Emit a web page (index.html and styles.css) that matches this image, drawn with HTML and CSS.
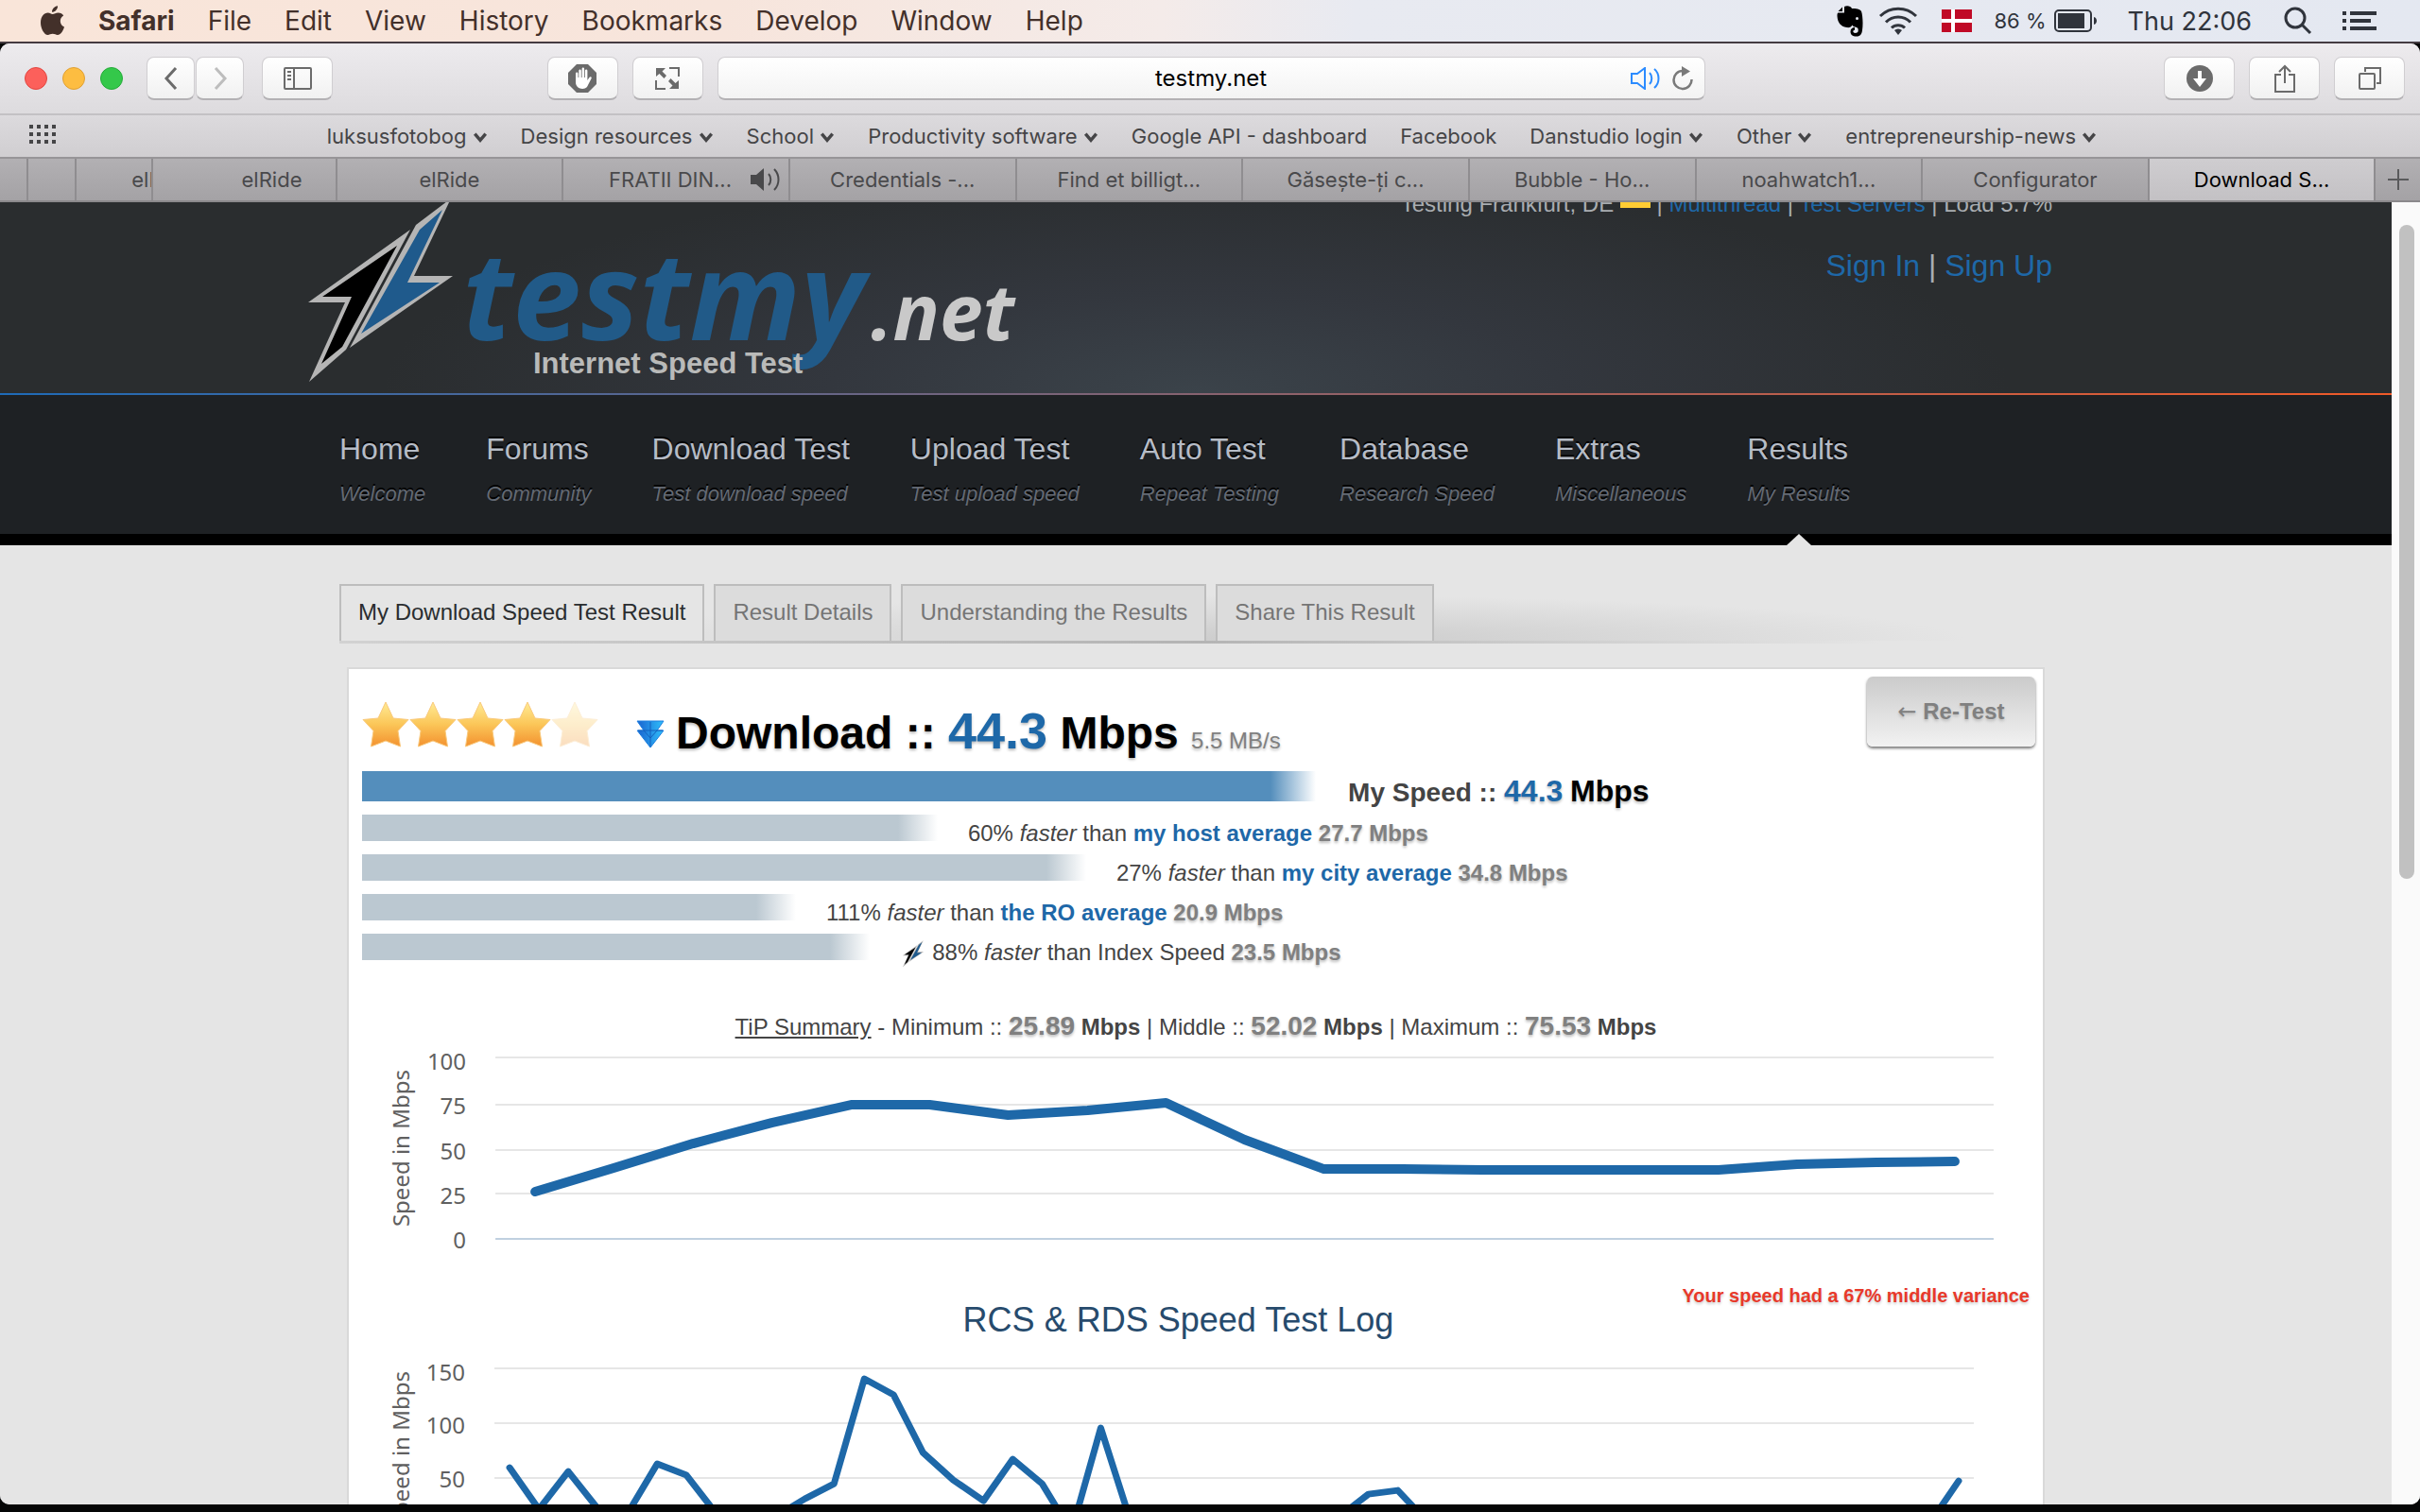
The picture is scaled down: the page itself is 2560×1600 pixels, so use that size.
FILE: index.html
```html
<!DOCTYPE html>
<html lang="en">
<head>
<meta charset="utf-8">
<meta name="viewport" content="width=device-width, initial-scale=1">
<title>Download Speed Test Result</title>
<link rel="stylesheet" href="styles.css">
</head>
<body>

<svg class="defs" aria-hidden="true">
  <defs>
    <symbol id="chevron" viewBox="0 0 14 12"><path d="M2 3l5 6 5-6" fill="none" stroke="currentColor" stroke-width="3"/></symbol>
    <symbol id="bolt" viewBox="0 0 156 206">
      <path d="M109 41L1 118h39L2 202l39-34z" fill="#b5b5b5"/>
      <path d="M95 58L16 112h31L15 183l22-18z" fill="#000"/>
      <path d="M152 8l-37 28L45 166l109-76h-41z" fill="#b5b5b5"/>
      <path d="M143 20l-24 21L57 151l83-54h-34z" fill="#1f5a8c"/>
    </symbol>
    <linearGradient id="gold" x1="0" y1="0" x2="0" y2="1">
      <stop offset="0" stop-color="#ffeb95"/>
      <stop offset=".5" stop-color="#fbc658"/>
      <stop offset="1" stop-color="#f3912f"/>
    </linearGradient>
    <linearGradient id="sky" x1="0" y1="0" x2="1" y2="0">
      <stop offset="0" stop-color="#1a62cf"/>
      <stop offset="1" stop-color="#2fc0fb"/>
    </linearGradient>
    <symbol id="star" viewBox="0 0 50 50"><path d="M25 2l8 17 16 1.500-11 12 2.500 16.500L25 43 9.500 49 12 32.500 1 20.500 17 19z" fill="url(#gold)" stroke="#f9c97c" stroke-width="1" stroke-linejoin="round"/></symbol>
  </defs>
</svg>

<!-- System menu bar -->
<header class="menubar">
  <nav class="menus">
    <button aria-label="Apple"><svg width="27" height="32" viewBox="0 0 27 32"><path d="M13.500 9c2 0 3.500-1.500 6-1.500 2.600 0 4.600 1.300 5.700 3-5 3-4.200 10 .8 12C24.600 27 22 31 19 31c-2 0-3-1.200-5.300-1.200S10.500 31 8.500 31C5 31 1 24.500 1 18 1 11.500 4.800 7.500 8.700 7.500c2.200 0 3.300 1.500 4.800 1.500zM13 6.800C12.900 3.500 15.500.6 19 .2c.3 3.400-2.700 6.600-6 6.600z" fill="#43302a"/></svg></button>
    <button class="app">Safari</button>
    <button>File</button>
    <button>Edit</button>
    <button>View</button>
    <button>History</button>
    <button>Bookmarks</button>
    <button>Develop</button>
    <button>Window</button>
    <button>Help</button>
  </nav>
  <div class="status">
    <svg width="28" height="33" viewBox="0 0 28 33"><path d="M8 1c3-1.500 7-.5 8 2 4 0 9 .5 10 3 1.500 4 2 14 1 20-.5 4-2 6.500-6 6.500-4.500 0-6.500-2-6.500-5s2-4.500 4.500-4.500v3c-1.500 0-2 1-1.500 2 .5 1.200 4.500 1.300 5-.5.500-2 .2-4-1.500-4.500-2-.5-4-1-4.500-2.500-1 2-3 3-6 2.500C4 22 1 18 .5 11c0-2 0-3 1-3.500H8zM6 1.500V6H1.500z" fill="#000"/><circle cx="21.500" cy="13.500" r="1.500" fill="#e6e9f1"/></svg>
    <svg class="wifi" width="42" height="30" viewBox="0 0 42 30" fill="none" stroke="#30343c" stroke-width="3"><path d="M2 10a27 27 0 0 1 38 0M8 16.500a18 18 0 0 1 26 0M14 22.500a10 10 0 0 1 14 0"/><path d="M17 25a6 6 0 0 1 8 0l-4 5z" fill="#30343c" stroke="none"/></svg>
    <svg class="flag" width="32" height="24" viewBox="0 0 32 24"><path d="M0 0h32v24H0z" fill="#c00a26"/><path d="M10 0h4v24h-4zM0 10h32v4H0z" fill="#fff"/></svg>
    <span class="percent">86 %</span>
    <svg class="battery" width="46" height="24" viewBox="0 0 46 24"><rect x="1" y="1" width="38" height="22" rx="4" fill="none" stroke="#30343c" stroke-width="2"/><path d="M4 4h28v16H4zM42 8c4 1 4 7 0 8z" fill="#30343c"/></svg>
    <span class="clock">Thu 22:06</span>
    <svg width="30" height="30" viewBox="0 0 30 30" fill="none" stroke="#30343c" stroke-width="3"><circle cx="12" cy="12" r="10"/><path d="M19 19l9 9"/></svg>
    <svg class="list" width="36" height="22" viewBox="0 0 36 22"><path d="M0 1h4v4H0zM8 1h28v4H8zM0 9h4v4H0zM8 9h22v4H8zM0 17h4v4H0zM8 17h28v4H8z" fill="#30343c"/></svg>
  </div>
</header>

<div class="window">

  <div class="toolbar">
    <div class="lights">
      <button class="close" aria-label="Close"></button>
      <button class="minimise" aria-label="Minimise"></button>
      <button class="zoom" aria-label="Zoom"></button>
    </div>
    <div class="history">
      <button class="tool" aria-label="Back"><svg width="16" height="26" viewBox="0 0 16 26"><path d="M13 2L3 13l10 11" fill="none" stroke="#6b6b6b" stroke-width="3"/></svg></button>
      <button class="tool" aria-label="Forward"><svg width="16" height="26" viewBox="0 0 16 26"><path d="M3 2l10 11L3 24" fill="none" stroke="#bdbdbd" stroke-width="3"/></svg></button>
    </div>
    <button class="tool wide" aria-label="Sidebar"><svg width="30" height="24" viewBox="0 0 30 24" fill="none" stroke="#6b6b6b" stroke-width="2"><rect x="1" y="1" width="28" height="22" rx="1"/><path d="M11 1v22M4 5h4M4 9h4M4 13h4"/></svg></button>
    <div class="extensions">
      <button class="tool wide" aria-label="Block ads"><svg width="30" height="30" viewBox="0 0 30 30"><path d="M9 0h12l9 9v12l-9 9H9l-9-9V9z" fill="#6b6b6b"/><path d="M8 10c0-2 2.500-2 2.500 0v4h.8V7c0-2 2.500-2 2.500 0v7h.8V5c0-2 2.500-2 2.500 0v9h.8V7c0-2 2.500-2 2.500 0v10l2-3c1-1.500 3-.6 2.200 1L20 24c-3 3.500-12 2.500-12-5z" fill="#fff"/></svg></button>
      <button class="tool wide" aria-label="Expand"><svg width="26" height="24" viewBox="0 0 26 24"><path d="M1 10V1h10L7.500 4.500 12 9 9.500 12 4.500 7zM25 14v9H15l3.500-3.500L14 15l2.500-3 5 5z" fill="#6b6b6b"/><path d="M15 1h10v9M1 14v9h10" fill="none" stroke="#6b6b6b" stroke-width="2"/></svg></button>
    </div>
    <div class="address">
      <input type="text" value="testmy.net" aria-label="Address">
      <div class="address-icons">
        <button aria-label="Mute"><svg width="32" height="24" viewBox="0 0 32 24" fill="none" stroke="#2b8bff" stroke-width="2"><path d="M1 7h6l8-6v22l-8-6H1zM20 6c3 3 3 9 0 12M25 2c6 5 6 15 0 20"/></svg></button>
        <button aria-label="Reload"><svg width="24" height="26" viewBox="0 0 24 26"><path d="M12 5A9.500 9.500 0 1 0 21.500 14" fill="none" stroke="#7a7a7a" stroke-width="2.500"/><path d="M11 0l9 5.500-9 5.500z" fill="#7a7a7a"/></svg></button>
      </div>
    </div>
    <div class="actions">
      <button class="tool wide" aria-label="Downloads"><svg width="28" height="28" viewBox="0 0 28 28"><circle cx="14" cy="14" r="14" fill="#6b6b6b"/><path d="M12 6h4v8h5l-7 9-7-9h5z" fill="#fff"/></svg></button>
      <button class="tool wide" aria-label="Share"><svg width="24" height="30" viewBox="0 0 24 30" fill="none" stroke="#6b6b6b" stroke-width="2"><path d="M8 11H2v18h20V11h-6M12 20V2M6 8l6-6 6 6"/></svg></button>
      <button class="tool wide" aria-label="Show all tabs"><svg width="24" height="24" viewBox="0 0 24 24" fill="none" stroke="#6b6b6b" stroke-width="2"><rect x="1" y="7" width="16" height="16" rx="1"/><path d="M7 5V1h16v16h-4"/></svg></button>
    </div>
  </div>

  <nav class="favorites">
    <button class="grid" aria-label="Top sites"><svg width="28" height="20" viewBox="0 0 28 20"><path d="M0 0h4v4H0zM8 0h4v4H8zM16 0h4v4h-4zM24 0h4v4h-4zM0 8h4v4H0zM8 8h4v4H8zM16 8h4v4h-4zM24 8h4v4h-4zM0 16h4v4H0zM8 16h4v4H8zM16 16h4v4h-4zM24 16h4v4h-4z" fill="#454547"/></svg></button>
    <div class="links">
      <button>luksusfotobog <svg class="chevron"><use href="#chevron"/></svg></button>
      <button>Design resources <svg class="chevron"><use href="#chevron"/></svg></button>
      <button>School <svg class="chevron"><use href="#chevron"/></svg></button>
      <button>Productivity software <svg class="chevron"><use href="#chevron"/></svg></button>
      <a href="#">Google API - dashboard</a>
      <a href="#">Facebook</a>
      <button>Danstudio login <svg class="chevron"><use href="#chevron"/></svg></button>
      <button>Other <svg class="chevron"><use href="#chevron"/></svg></button>
      <button>entrepreneurship-news <svg class="chevron"><use href="#chevron"/></svg></button>
    </div>
  </nav>

  <div class="browser-tabs">
    <button class="t1" aria-label="Tab"></button>
    <button class="t2" aria-label="Tab"></button>
    <button class="t3">elRide</button>
    <button class="t4">elRide</button>
    <button>elRide</button>
    <button class="playing">FRATII DIN... <svg width="32" height="24" viewBox="0 0 32 24"><path d="M0 7h6l8-7v24l-8-7H0z" fill="#49494b"/><path d="M19 6c3 3 3 9 0 12M25 1c6 6 6 16 0 22" fill="none" stroke="#49494b" stroke-width="2"/></svg></button>
    <button>Credentials -...</button>
    <button>Find et billigt...</button>
    <button>Găsește-ți c...</button>
    <button>Bubble - Ho...</button>
    <button>noahwatch1...</button>
    <button>Configurator</button>
    <button class="active">Download S...</button>
    <button class="new" aria-label="New tab"><svg width="24" height="24" viewBox="0 0 24 24"><path d="M12 1v22M1 12h22" stroke="#5a5a5c" stroke-width="2"/></svg></button>
  </div>

  <div class="viewport">
    <main class="page">

      <div class="masthead">
        <div class="container masthead-row">
          <svg class="logo" width="760" height="214" viewBox="0 0 760 214">
            <use href="#bolt" width="156" height="206"/>
            <text class="logo-name" x="164" y="158">testmy</text>
            <text class="logo-net" x="596" y="158">.net</text>
            <text class="logo-tag" x="239" y="193">Internet Speed Test</text>
          </svg>
          <div class="account">
            <div class="server">Testing Frankfurt, DE <span class="de"></span> | <a href="#">Multithread</a> | <a href="#">Test Servers</a> | Load 5.7%</div>
            <div class="sign"><a href="#">Sign In</a> | <a href="#">Sign Up</a></div>
          </div>
        </div>
      </div>

      <nav class="mainnav">
        <div class="container mainnav-row">
          <a href="#">Home<em>Welcome</em></a>
          <a href="#">Forums<em>Community</em></a>
          <a href="#">Download Test<em>Test download speed</em></a>
          <a href="#">Upload Test<em>Test upload speed</em></a>
          <a href="#">Auto Test<em>Repeat Testing</em></a>
          <a href="#">Database<em>Research Speed</em></a>
          <a href="#">Extras<em>Miscellaneous</em></a>
          <a href="#" class="current">Results<em>My Results</em></a>
        </div>
      </nav>

      <div class="container">
        <div class="result-tabs">
          <button class="active">My Download Speed Test Result</button>
          <button>Result Details</button>
          <button>Understanding the Results</button>
          <button>Share This Result</button>
        </div>

        <section class="card">
          <div class="card-head">
            <div class="rating" role="img" aria-label="4 out of 5 stars">
              <svg><use href="#star"/></svg><svg><use href="#star"/></svg><svg><use href="#star"/></svg><svg><use href="#star"/></svg><svg class="off"><use href="#star"/></svg>
            </div>
            <h1><svg class="down" width="30" height="30" viewBox="0 0 30 30"><path d="M1 1h28l-7 10h7L15 29 1 11h7z" fill="url(#sky)" stroke="#1b7fe0" stroke-width="1"/><path d="M2 11h26M8 11l7 8 7-8M15 2v26" fill="none" stroke="#1461bd" stroke-width="1"/></svg>Download :: <span class="speed">44.3</span> Mbps <small>5.5 MB/s</small></h1>
            <button class="retest"><span class="arrow">←</span> Re-Test</button>
          </div>

          <div class="compare">
            <div class="row mine"><div class="bar" style="width:58%"></div><div>My Speed :: <b class="speed">44.3</b> <b class="unit">Mbps</b></div></div>
            <div class="row"><div class="bar" style="width:35.200%"></div><div>60% <i>faster</i> than <a href="#">my host average</a> <b>27.7 Mbps</b></div></div>
            <div class="row"><div class="bar" style="width:44.100%"></div><div>27% <i>faster</i> than <a href="#">my city average</a> <b>34.8 Mbps</b></div></div>
            <div class="row"><div class="bar" style="width:26.700%"></div><div>111% <i>faster</i> than <a href="#">the RO average</a> <b>20.9 Mbps</b></div></div>
            <div class="row"><div class="bar" style="width:31.100%"></div><div><svg class="mini-bolt"><use href="#bolt"/></svg> 88% <i>faster</i> than Index Speed <b>23.5 Mbps</b></div></div>
          </div>

          <p class="summary"><u>TiP Summary</u> - Minimum :: <b class="num">25.89</b> <b>Mbps</b> | Middle :: <b class="num">52.02</b> <b>Mbps</b> | Maximum :: <b class="num">75.53</b> <b>Mbps</b></p>

          <svg class="chart" viewBox="0 0 1763 230">
            <path class="gridline" d="M141 13h1584M141 63h1584M141 111h1584M141 157h1584"/>
            <path class="axis" d="M141 205h1584"/>
            <text class="tick" x="110" y="26">100</text>
            <text class="tick" x="110" y="73">75</text>
            <text class="tick" x="110" y="121">50</text>
            <text class="tick" x="110" y="168">25</text>
            <text class="tick" x="110" y="215">0</text>
            <text class="axis-title" transform="translate(50 109) rotate(-90)">Speed in Mbps</text>
            <polyline class="series thick" points="183,155 266,130 350,104 433,82 517,63 600,63 683,74 767,69 850,61 933,100 1017,131 1100,131 1184,132 1267,132 1350,132 1434,132 1517,126 1601,124 1684,123"/>
          </svg>

          <p class="variance">Your speed had a 67% middle variance</p>

          <svg class="chart" viewBox="0 0 1763 360">
            <text class="chart-title" x="863" y="26">RCS &amp; RDS Speed Test Log</text>
            <path class="gridline" d="M140 65h1564M140 123h1564M140 181h1564"/>
            <path class="axis" d="M140 239h1564"/>
            <text class="tick" x="109" y="78">150</text>
            <text class="tick" x="109" y="134">100</text>
            <text class="tick" x="109" y="191">50</text>
            <text class="tick" x="109" y="249">0</text>
            <text class="axis-title" transform="translate(50 151) rotate(-90)">Speed in Mbps</text>
            <polyline class="series" points="156,170 187,214 218,174 249,213 281,218 312,166 343,178 374,218 405,230 437,222 468,203 499,187 531,76 562,93 593,154 625,183 657,205 688,161 719,187 750,238 781,128 812,225 844,232 1002,232 1033,222 1064,198 1095,194 1127,228 1158,232 1626,232 1658,228 1688,184"/>
          </svg>
        </section>
      </div>
    </main>
    <div class="scrollbar"><div class="thumb"></div></div>
  </div>
</div>

</body>
</html>
```

FILE: styles.css
```css
* {
  box-sizing: border-box;
}

html,
body {
  height: 100%;
}

body {
  margin: 0;
  display: flex;
  flex-direction: column;
  overflow: hidden;
  padding-bottom: 8px;
  background: #050606;
  font-family: "Liberation Sans", Arial, sans-serif;
}

button {
  border: none;
  padding: 0;
  margin: 0;
  background: none;
  font: inherit;
  color: inherit;
  cursor: pointer;
}

a {
  text-decoration: none;
  color: #1e68a8;
}

svg {
  flex: none;
}

.defs {
  position: absolute;
  width: 0;
  height: 0;
}

/* Menu bar */
.menubar {
  flex: none;
  display: flex;
  justify-content: space-between;
  align-items: center;
  height: 46px;
  padding: 0 46px 0 42px;
  border-bottom: 2px solid #443b41;
  background: linear-gradient(90deg, #f9e5d9 0%, #f7e5dc 30%, #f4ebe9 48%, #e8eaf1 56%, #e4e8f1 100%);
  font-family: Inter, Roboto, sans-serif;
  font-size: 28px;
  color: #43302a;
}

.menus,
.status {
  display: flex;
  align-items: center;
}

.menus {
  gap: 35px;
}

.menus svg {
  display: block;
}

.menus .app {
  font-weight: 700;
}

.status {
  color: #30343c;
  font-size: 27px;
}

.wifi {
  margin-left: 16px;
}

.flag {
  margin: 0 24px 0 25px;
}

.percent {
  font-size: 22px;
}

.battery {
  margin: 0 32px 0 8px;
}

.clock {
  margin-right: 34px;
}

.list {
  margin-left: 32px;
}

/* Browser window */
.window {
  flex: 1;
  min-height: 0;
  display: flex;
  flex-direction: column;
  overflow: hidden;
  border-radius: 10px;
  background: #dcdadd;
  font-family: Inter, Roboto, sans-serif;
}

.toolbar {
  flex: none;
  display: flex;
  align-items: center;
  height: 76px;
  padding: 0 16px 0 26px;
  border-bottom: 2px solid #c3c1c4;
  background: linear-gradient(#edebee, #dddbde);
}

.lights {
  display: flex;
  gap: 16px;
  margin-right: 25px;
}

.lights button {
  width: 24px;
  height: 24px;
  border: 1px solid #e2453f;
  border-radius: 50%;
  background: #fc605b;
}

.lights .minimise {
  border-color: #e0a033;
  background: #fdbd41;
}

.lights .zoom {
  border-color: #24ab39;
  background: #34c84a;
}

.tool {
  display: flex;
  align-items: center;
  justify-content: center;
  width: 51px;
  height: 46px;
  border: 1px solid #d0ced1;
  border-bottom: 2px solid #b3b1b4;
  border-radius: 8px;
  background: linear-gradient(#ffffff, #f1f1f1);
}

.tool.wide {
  width: 75px;
}

.history {
  display: flex;
  gap: 1px;
  margin-right: 19px;
}

.extensions,
.actions {
  display: flex;
  gap: 15px;
}

.extensions {
  margin: 0 15px 0 9%;
}

.actions {
  margin-left: auto;
}

.address {
  position: relative;
  width: 41.5%;
}

.address input {
  display: block;
  width: 100%;
  height: 46px;
  border: 1px solid #d0ced1;
  border-bottom: 2px solid #b3b1b4;
  border-radius: 8px;
  background: linear-gradient(#ffffff, #f3f3f3);
  text-align: center;
  font-family: inherit;
  font-size: 24px;
  color: #000000;
}

.address-icons {
  position: absolute;
  top: 10px;
  right: 12px;
  display: flex;
  align-items: center;
  gap: 11px;
}

.address-icons svg {
  display: block;
}

.favorites {
  flex: none;
  display: flex;
  align-items: center;
  height: 46px;
  padding: 0 55px 0 31px;
  border-bottom: 2px solid #979598;
  background: linear-gradient(#dcdadd, #d0ced1);
  font-size: 22px;
  color: #454547;
}

.links {
  flex: 1;
  display: flex;
  justify-content: center;
  gap: 35px;
}

.links a {
  color: inherit;
}

.chevron {
  width: 16px;
  height: 14px;
}

.browser-tabs {
  flex: none;
  display: flex;
  height: 46px;
  border-bottom: 2px solid #8b898c;
  background: linear-gradient(#b2b0b3, #a4a2a5);
  font-size: 22px;
  color: #49494b;
}

.browser-tabs button {
  position: relative;
  flex: 240 1 0;
  min-width: 0;
  overflow: hidden;
  white-space: nowrap;
  border-right: 2px solid #8f8d90;
}

.browser-tabs .t1 {
  flex-grow: 28;
}

.browser-tabs .t2 {
  flex-grow: 50;
}

.browser-tabs .t3 {
  flex-grow: 80;
  text-indent: 58px;
  text-align: left;
}

.browser-tabs .t4 {
  flex-grow: 194;
  text-indent: 58px;
}

.browser-tabs .playing {
  text-indent: -12px;
}

.browser-tabs .playing svg {
  position: absolute;
  top: 10px;
  right: 8px;
}

.browser-tabs .active {
  background: linear-gradient(#cfcdd0, #c3c1c4);
  color: #000000;
}

.browser-tabs .new {
  flex-grow: 47;
  display: flex;
  align-items: center;
  justify-content: center;
  border-right: none;
}

/* Page */
.viewport {
  flex: 1;
  min-height: 0;
  display: flex;
  overflow: hidden;
  background: #e5e5e5;
  font-family: "Liberation Sans", Arial, sans-serif;
}

.page {
  flex: 1;
  margin-top: -12px;
}

.scrollbar {
  width: 30px;
  padding: 24px 6px 24px 8px;
  background: #fafafa;
}

.thumb {
  height: 52%;
  border-radius: 8px;
  background: #c1c1c1;
}

.container {
  width: 72%;
  max-width: 1812px;
  margin: 0 auto;
}

.masthead {
  background: radial-gradient(ellipse 34% 110% at 50% 100%, #3b434a, #33373e 45%, #2a2d2f);
}

.masthead-row {
  display: flex;
  justify-content: space-between;
}

.logo {
  display: block;
  margin-left: -34px;
}

.logo-name,
.logo-net {
  font-family: "Open Sans", sans-serif;
  font-weight: 700;
  font-style: italic;
}

.logo-name {
  font-size: 130px;
  fill: #215a88;
}

.logo-net {
  font-size: 82px;
  fill: #c9c9c9;
}

.logo-tag {
  font-size: 31px;
  font-weight: 700;
  fill: #b9bab9;
}

.account {
  text-align: right;
  color: #a9adb1;
}

.server {
  font-size: 24px;
  line-height: 28px;
  margin-bottom: 31px;
}

.de {
  display: inline-block;
  width: 32px;
  height: 22px;
  vertical-align: 4px;
  margin: -4px 0 0;
  background: linear-gradient(#000 33%, #d00 33% 66%, #fc3 66%);
}

.sign {
  font-size: 32px;
  line-height: 40px;
}

.mainnav {
  border-top: 2px solid;
  border-image: linear-gradient(90deg, #1e6bb8, #f05a28) 1;
  background: #1e2124;
}

.mainnav-row {
  display: flex;
  gap: 64px;
}

.mainnav a {
  padding: 37px 0 22px;
  font-size: 32px;
  line-height: 40px;
  color: #b6bcc6;
  text-shadow: 0 -2px 0 #000000;
}

.mainnav em {
  display: block;
  margin-top: 8px;
  font-size: 22px;
  color: #646a74;
}

.mainnav .current {
  position: relative;
}

/* black rule under the nav, the pointer sits on top of it */
.mainnav::after {
  content: "";
  display: block;
  height: 12px;
  background: #000000;
}

.mainnav .current::after {
  content: "";
  position: absolute;
  z-index: 1;
  left: 50%;
  bottom: -12px;
  margin-left: -13px;
  border: 13px solid transparent;
  border-top: none;
  border-bottom: 12px solid #e5e5e5;
}

.result-tabs {
  display: flex;
  gap: 10px;
  margin: 41px 0 25px;
  border-bottom: 3px solid;
  border-image: linear-gradient(90deg, #d2d2d2, #b4b4b4 50%, #e5e5e5 90%) 1;
  background: radial-gradient(ellipse 40% 80% at 55% 100%, #cbcbcb, #e5e5e5);
}

.result-tabs button {
  padding: 0 18px 2px;
  border: 2px solid #bdbdbd;
  border-bottom: none;
  background: #dcdcdc;
  font-size: 24px;
  line-height: 56px;
  color: #757575;
}

.result-tabs .active {
  background: #e5e5e5;
  color: #2a2d2f;
}

.card {
  margin: 0 8px;
  padding: 8px;
  border: 2px solid #d9d9d9;
  background: #ffffff;
  font-size: 24px;
  line-height: 28px;
  color: #444444;
}

.card-head {
  display: flex;
  align-items: flex-start;
  height: 100px;
}

.rating {
  display: flex;
  padding: 25px 0 0 6px;
}

.rating svg {
  width: 50px;
  height: 50px;
}

.rating .off {
  opacity: .3;
}

h1 {
  margin: 27px 0 0 40px;
  font-size: 48px;
  line-height: 60px;
  color: #000000;
  text-shadow: 0 2px 3px #bbbbbb;
}

h1 .speed {
  font-size: 54px;
}

h1 small {
  font-size: 24px;
  font-weight: 400;
  color: #808080;
}

.down {
  margin-right: 12px;
}

.speed {
  color: #1e68a8;
}

.retest {
  margin-left: auto;
  width: 178px;
  height: 74px;
  border-radius: 6px;
  background: linear-gradient(#cbcbcb, #f2f2f2);
  box-shadow: 0 2px 3px #777777;
  font-weight: 700;
  color: #808080;
  text-shadow: 0 2px 3px #bbbbbb;
}

.arrow {
  font-family: "DejaVu Sans", sans-serif;
  font-weight: 400;
}

.compare {
  padding: 0 6px;
}

.row {
  display: flex;
  align-items: baseline;
  gap: 20px;
  min-height: 42px;
}

.bar {
  flex: none;
  height: 28px;
  background: linear-gradient(90deg, #bbc8d1 calc(100% - 54px), transparent calc(100% - 12px));
}

.row a {
  font-weight: 700;
}

.row b {
  color: #808080;
  text-shadow: 0 2px 3px #bbbbbb;
}

.row.mine {
  min-height: 46px;
  font-size: 28px;
  font-weight: 700;
}

.mine .bar {
  height: 32px;
  background: linear-gradient(90deg, #548ebc calc(100% - 62px), transparent calc(100% - 14px));
}

.mine .speed,
.mine .unit {
  font-size: 32px;
  color: #1e68a8;
}

.mine .unit {
  color: #000000;
}

.mini-bolt {
  width: 28px;
  height: 30px;
  vertical-align: -8px;
}

.summary {
  margin: 40px 0 3px;
  text-align: center;
  line-height: 32px;
}

.summary .num {
  font-size: 28px;
  color: #808080;
  text-shadow: 0 2px 3px #bbbbbb;
}

.chart {
  display: block;
  width: 100%;
  padding: 0 6px;
}

.gridline {
  stroke: #e6e6e6;
  stroke-width: 2;
}

.axis {
  stroke: #c0d0e0;
  stroke-width: 2;
}

.tick,
.axis-title {
  font-family: "Noto Sans", sans-serif;
  font-size: 24px;
  fill: #606060;
}

.tick {
  text-anchor: end;
}

.axis-title,
.chart-title {
  text-anchor: middle;
}

.chart-title {
  font-size: 36px;
  fill: #274b6d;
}

.series {
  fill: none;
  stroke: #1e68a8;
  stroke-width: 7;
  stroke-linecap: round;
  stroke-linejoin: round;
}

.series.thick {
  stroke-width: 10;
}

.variance {
  margin: 23px 6px 0;
  text-align: right;
  font-size: 20px;
  line-height: 24px;
  font-weight: 700;
  color: #e8392a;
  text-shadow: 0 2px 3px #cccccc;
}
```
